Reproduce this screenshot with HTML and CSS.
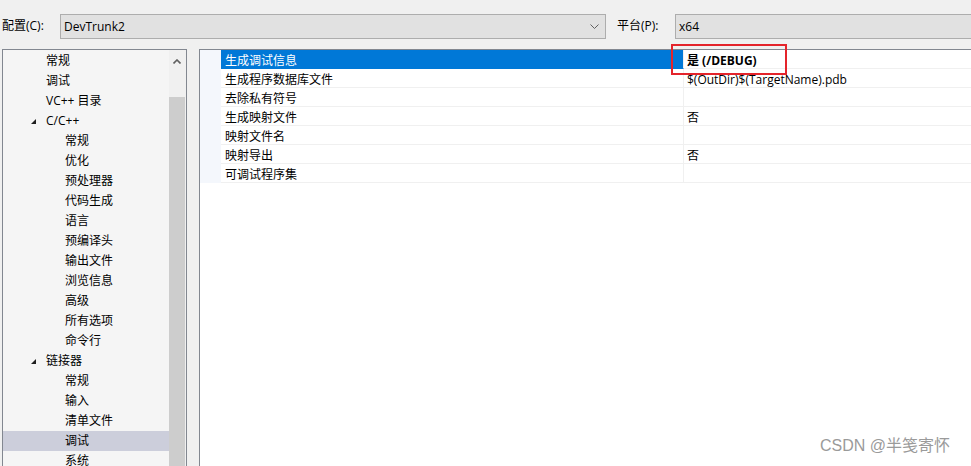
FILE: index.html
```html
<!DOCTYPE html>
<html>
<head>
<meta charset="utf-8">
<link rel="stylesheet" href="styles.css">
</head>
<body>
<div class="toolbar">
  <span class="lbl">配置(C):</span>
  <div class="combo combo-config">
    <span class="combo-text">DevTrunk2</span>
    <svg class="chev" width="9" height="6" viewBox="0 0 9 6"><path d="M0.5 0.5 L4.5 4.5 L8.5 0.5" fill="none" stroke="#606060" stroke-width="1"/></svg>
  </div>
  <span class="lbl lbl-platform">平台(P):</span>
  <div class="combo combo-platform">
    <span class="combo-text">x64</span>
  </div>
</div>
<div class="main">
  <div class="tree">
    <ul class="items">
      <li class="l1">常规</li>
      <li class="l1">调试</li>
      <li class="l1">VC++ 目录</li>
      <li class="l1 exp"><svg class="tri" width="5" height="5" viewBox="0 0 5 5"><polygon points="5,0 5,5 0,5" fill="#1e1e1e"/></svg>C/C++</li>
      <li class="l2">常规</li>
      <li class="l2">优化</li>
      <li class="l2">预处理器</li>
      <li class="l2">代码生成</li>
      <li class="l2">语言</li>
      <li class="l2">预编译头</li>
      <li class="l2">输出文件</li>
      <li class="l2">浏览信息</li>
      <li class="l2">高级</li>
      <li class="l2">所有选项</li>
      <li class="l2">命令行</li>
      <li class="l1 exp"><svg class="tri" width="5" height="5" viewBox="0 0 5 5"><polygon points="5,0 5,5 0,5" fill="#1e1e1e"/></svg>链接器</li>
      <li class="l2">常规</li>
      <li class="l2">输入</li>
      <li class="l2">清单文件</li>
      <li class="l2 sel">调试</li>
      <li class="l2">系统</li>
    </ul>
    <div class="scroll">
      <div class="up"><svg width="8" height="5" viewBox="0 0 8 5"><path d="M0.5 4.5 L4 1 L7.5 4.5" fill="none" stroke="#606060" stroke-width="1.6"/></svg></div>
      <div class="thumb"></div>
    </div>
  </div>
  <div class="grid">
    <div class="props">
      <div class="row selected"><div class="margin"></div><div class="name">生成调试信息</div><div class="value bold">是 (/DEBUG)</div></div>
      <div class="row"><div class="margin"></div><div class="name">生成程序数据库文件</div><div class="value">$(OutDir)$(TargetName).pdb</div></div>
      <div class="row"><div class="margin"></div><div class="name">去除私有符号</div><div class="value"></div></div>
      <div class="row"><div class="margin"></div><div class="name">生成映射文件</div><div class="value">否</div></div>
      <div class="row"><div class="margin"></div><div class="name">映射文件名</div><div class="value"></div></div>
      <div class="row"><div class="margin"></div><div class="name">映射导出</div><div class="value">否</div></div>
      <div class="row"><div class="margin"></div><div class="name">可调试程序集</div><div class="value"></div></div>
    </div>
  </div>
</div>
<div class="redbox"></div>
<div class="watermark">CSDN @半笺寄怀</div>
</body>
</html>
```

FILE: styles.css
```css
* { box-sizing: border-box; }
html, body {
  margin: 0;
  padding: 0;
  width: 971px;
  height: 466px;
  overflow: hidden;
}
body {
  background: #f0f0f0;
  font-family: "Open Sans", "Noto Sans CJK SC", sans-serif;
  font-size: 12px;
  color: #000;
  position: relative;
}
.toolbar {
  height: 49px;
  display: flex;
  align-items: flex-start;
  padding-top: 14px;
}
.lbl {
  height: 25px;
  line-height: 24px;
  padding-left: 2px;
  width: 60px;
  white-space: nowrap;
}
.lbl-platform {
  width: 58px;
  padding-left: 0;
  margin-left: 11px;
}
.combo {
  height: 25px;
  background: #e1e1e1;
  border: 1px solid #adadad;
  display: flex;
  align-items: center;
  padding-left: 3px;
}
.combo-config {
  width: 546px;
  justify-content: space-between;
  padding-right: 6px;
}
.combo-platform {
  flex: 1;
  margin-right: -5px;
}
.combo-text { line-height: 22px; }
.chev { display: block; margin-top: 1px; }
.main {
  display: flex;
  height: 417px;
}
.tree {
  width: 185px;
  margin-left: 2px;
  margin-right: 12px;
  border: 1px solid #828790;
  border-bottom: none;
  background: #f5f5f5;
  display: flex;
  padding-top: 1px;
}
.items {
  list-style: none;
  margin: 0;
  padding: 0;
  width: 166px;
}
.items li {
  height: 20px;
  line-height: 20px;
  white-space: nowrap;
  position: relative;
}
.items .l1 { padding-left: 43px; }
.items .l2 { padding-left: 62px; }
.items .sel { background: #cccedb; }
.tri {
  position: absolute;
  left: 28px;
  top: 8px;
}
.scroll {
  width: 17px;
  margin-top: -1px;
  background: #f0f0f0;
  display: flex;
  flex-direction: column;
}
.up {
  height: 47px;
  display: flex;
  justify-content: center;
  align-items: flex-start;
  padding-top: 9px;
  padding-right: 1px;
}
.thumb {
  flex: 1;
  background: #cdcdcd;
  margin-right: 1px;
}
.grid {
  flex: 1;
  border-left: 1px solid #828790;
  border-top: 1px solid #828790;
  background: #fff;
}
.props {
  display: flex;
  flex-direction: column;
}
.row {
  display: flex;
  height: 19px;
}
.margin {
  width: 21px;
  background: #f4f7fc;
}
.name, .value {
  border-bottom: 1px solid #f0f0f0;
  line-height: 19px;
  padding-top: 1px;
  white-space: nowrap;
}
.name {
  width: 463px;
  padding-left: 4px;
  border-right: 1px solid #f0f0f0;
}
.value {
  flex: 1;
  padding-left: 3px;
}
.bold { font-weight: bold; }
.selected .name {
  background: #0078d7;
  color: #fff;
  border-bottom-color: #0078d7;
}
.redbox {
  position: absolute;
  left: 671px;
  top: 44px;
  width: 116px;
  height: 31px;
  border: 2px solid #e4242b;
}
.watermark {
  position: absolute;
  left: 820px;
  top: 436px;
  font-family: "Liberation Sans", "Noto Sans CJK SC", sans-serif;
  font-size: 16px;
  line-height: 20px;
  color: #9a9a9a;
  white-space: nowrap;
}
```
